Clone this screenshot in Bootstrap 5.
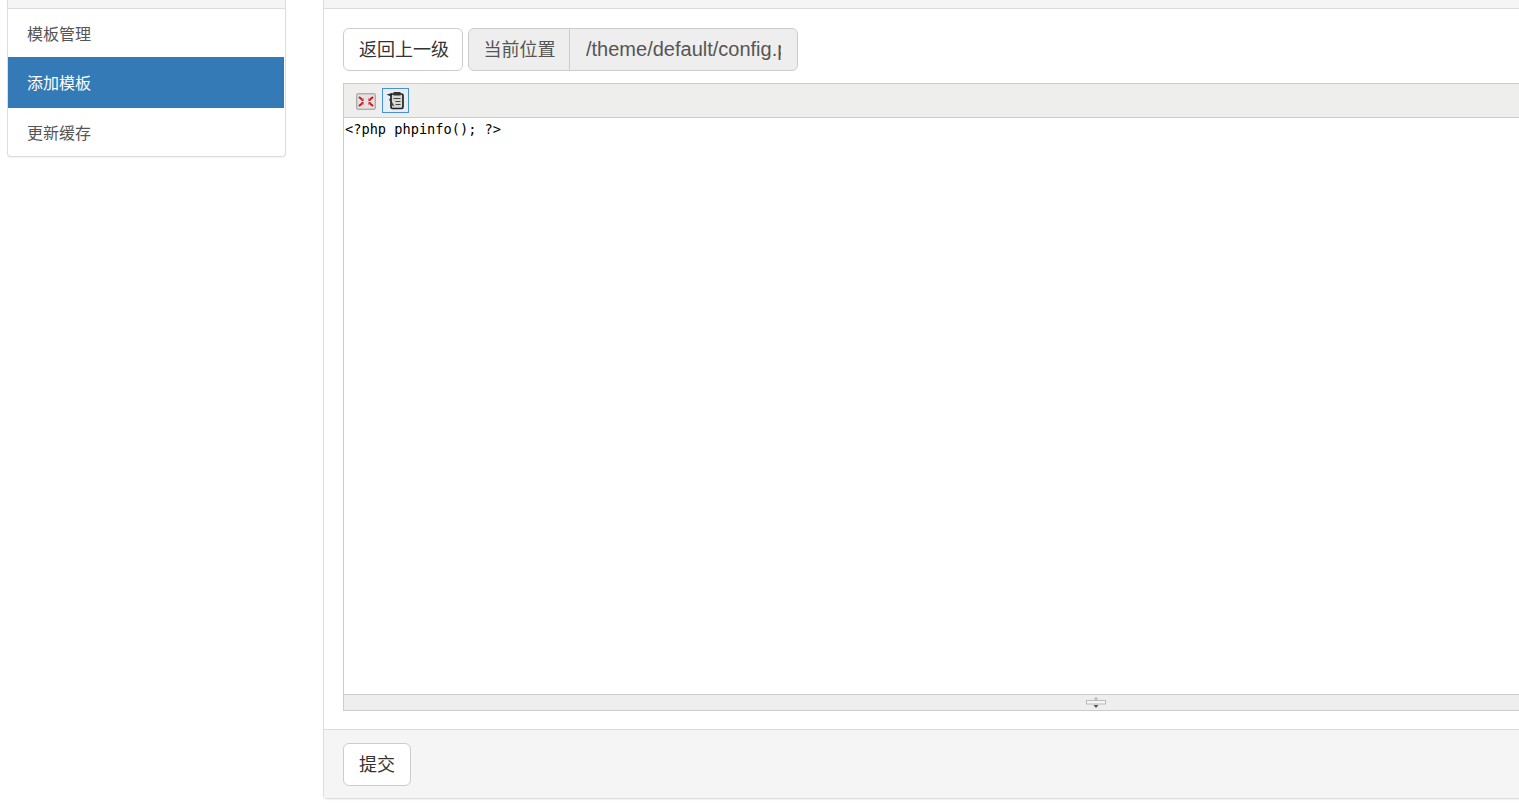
<!DOCTYPE html>
<html lang="zh-CN">
<head>
<meta charset="utf-8">
<title>添加模板</title>
<link rel="stylesheet" href="https://cdn.jsdelivr.net/npm/bootstrap@5.3.0/dist/css/bootstrap.min.css">
<style>
html,body{height:807px;overflow:hidden;background:#fff}
body{font-family:"Liberation Sans","Noto Sans CJK SC",sans-serif;color:#555}
.page-wrap{width:1900px;padding-left:7px;gap:37px}
.side-panel{width:279px;height:157px;border:1px solid #ddd;border-top:0;border-radius:0 0 4px 4px;box-shadow:0 1px 1px rgba(0,0,0,.05);background:#fff}
.main-panel{width:1544px;height:799px;border:1px solid #ddd;border-top:0;border-radius:0 0 4px 4px;box-shadow:0 1px 1px rgba(0,0,0,.05);background:#fff}
.cap-bar{height:9px;background:#f5f5f5;border-bottom:1px solid #ddd}
.side-link{display:block;font-size:16px;line-height:24px;color:#555;padding:14px 19px 10px;text-decoration:none;height:48px}
.side-link.is-on{background:#337ab7;color:#fff;height:51px;padding-top:15px;margin-right:1px}
.main-body{padding:19px 19px 18px;height:720px}
.tool-row{gap:5px;height:43px;margin-bottom:12px}
.plain-btn{font-size:18px;line-height:27px;padding:8px 15px 6px;border:1px solid #ccc;border-radius:6px;background:#fff;color:#333;height:43px;white-space:nowrap;font-family:inherit}
.back-btn{width:120px;padding-left:15px;padding-right:0;text-align:left}
.path-group{width:330px;height:43px;flex-wrap:nowrap}
.path-label{width:102px;flex:none;font-size:18px;line-height:27px;padding:7px 0 5px 1px;justify-content:center;color:#555;background:#eee;border-color:#ccc;border-radius:6px 0 0 6px}
.path-value{font-family:inherit;font-size:20px;line-height:28px;height:43px;color:#555;padding:6px 16px 7px;background:#eee;border-color:#ccc;border-radius:0 6px 6px 0}
.path-value:disabled{background:#eee;color:#555;opacity:1}
.editor-box{width:1505px;height:628px;border:1px solid #ccc;background:#fff}
.editor-tools{height:34px;background:#eeeeec;border-bottom:1px solid #ccc;padding:4px 0 0 12px;gap:6px}
.ico-plain{width:20px;height:17px;margin-top:5px}
.ico-active{width:27px;height:25px;border:1px solid #4a90d9;background:#e6eef8;padding:2px 3px}
.editor-code{flex:1;padding:2px 1px;font-family:"DejaVu Sans Mono","Liberation Mono",monospace;font-size:13.65px;line-height:18px;color:#000;white-space:pre}
.editor-foot{height:16px;background:#eee;border-top:1px solid #ccc;padding-top:2px}
.foot-bar{height:69px;background:#f5f5f5;border-top:1px solid #ddd;padding:13px 19px}
</style>
</head>
<body>
<div class="d-flex align-items-start page-wrap">
  <div class="side-panel">
    <div class="cap-bar"></div>
    <a class="side-link" href="#">模板管理</a>
    <a class="side-link is-on" href="#">添加模板</a>
    <a class="side-link" href="#">更新缓存</a>
  </div>
  <div class="main-panel">
    <div class="cap-bar"></div>
    <div class="main-body">
      <div class="d-flex tool-row">
        <button type="button" class="btn plain-btn back-btn">返回上一级</button>
        <div class="input-group path-group">
          <span class="input-group-text path-label">当前位置</span>
          <input class="form-control path-value" type="text" value="/theme/default/config.php" disabled>
        </div>
      </div>
      <div class="d-flex flex-column editor-box">
        <div class="d-flex editor-tools">
          <svg class="ico-plain" viewBox="0 0 20 17"><rect x=".5" y=".5" width="19" height="16" rx="1.5" fill="#cfcbcb" stroke="#b0acac"/><rect x="2" y="2" width="16" height="13" fill="#e6e0e0"/><g stroke="#c4181c" stroke-width="2" fill="none"><path d="M3 4l3 2.500M17 4l-3 2.500M3 13l3-2.500M17 13l-3-2.500"/></g><g fill="#c4181c"><path d="M5 8h2.500V5zM15 8h-2.500V5zM5 9h2.500v3zM15 9h-2.500v3z"/></g></svg>
          <div class="ico-active d-flex">
            <svg width="19" height="19" viewBox="0 0 19 19"><path d="M.5 3.500L6 2v4z" fill="#333"/><rect x="5" y="3" width="12" height="14.500" rx="1.500" fill="#d8d8d2" stroke="#222" stroke-width="1.700"/><rect x="7.500" y="1" width="7" height="3.500" fill="#333"/><path d="M7.500 7.500h7M9.500 10.500h5M9.500 13.500h5" stroke="#444" stroke-width="1.200"/><path d="M3.500 8l4 7" stroke="#333" stroke-width="1.300" fill="none"/></svg>
          </div>
        </div>
        <div class="editor-code">&lt;?php phpinfo(); ?&gt;</div>
        <div class="d-flex justify-content-center editor-foot">
          <svg width="20" height="12" viewBox="0 0 20 12"><path d="M10 0l2 2.500H8z" fill="#aaa"/><rect x=".5" y="3.500" width="19" height="3.500" fill="#f6f6f6" stroke="#bbb"/><path d="M7.500 8h5L10 11z" fill="#555"/></svg>
        </div>
      </div>
    </div>
    <div class="foot-bar"><button type="button" class="btn plain-btn">提交</button></div>
  </div>
</div>
<script src="https://cdn.jsdelivr.net/npm/bootstrap@5.3.0/dist/js/bootstrap.bundle.min.js"></script>
</body>
</html>
